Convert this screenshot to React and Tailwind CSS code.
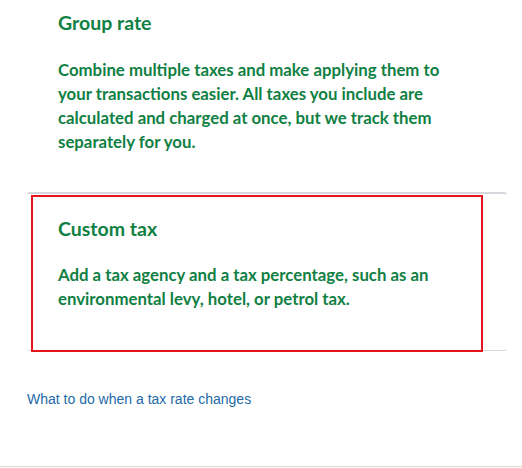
export default function App() {
  return (
    <div className="w-[522px] h-[468px] bg-white flex flex-col font-['Lato',sans-serif] text-[#108043] overflow-hidden">
      <div className="mx-[27px] w-[480px] pl-[31px] pr-[36px] pt-[11px] h-[192px] shrink-0">
        <h3 className="text-[19.5px] leading-[24px] font-bold">Group rate</h3>
        <p className="mt-[23px] text-[16.8px] leading-[24px] font-bold">
          Combine multiple taxes and make applying them to your transactions easier. All taxes you include are calculated and charged at once, but we track them separately for you.
        </p>
      </div>
      <div className="relative mx-[27px] w-[480px] h-[159px] shrink-0 rounded-[3px] border-t-2 border-b border-[#d4d7dc] pl-[31px] pr-[36px] pt-[23px]">
        <h3 className="text-[19.5px] leading-[24px] font-bold">Custom tax</h3>
        <p className="mt-[22px] text-[16.8px] leading-[24px] font-bold">
          Add a tax agency and a tax percentage, such as an environmental levy, hotel, or petrol tax.
        </p>
        <div className="absolute left-[4px] top-[1px] w-[452px] h-[157px] border-2 border-[#e8141b] pointer-events-none"></div>
      </div>
      <div className="px-[27px] pt-[35px] h-[115px] shrink-0">
        <a href="#" className="font-['Liberation_Sans',Arial,sans-serif] text-[14px] leading-[18px] text-[#236aa8]">
          What to do when a tax rate changes
        </a>
      </div>
      <div className="border-t border-[#d9d9d9]"></div>
    </div>
  );
}
